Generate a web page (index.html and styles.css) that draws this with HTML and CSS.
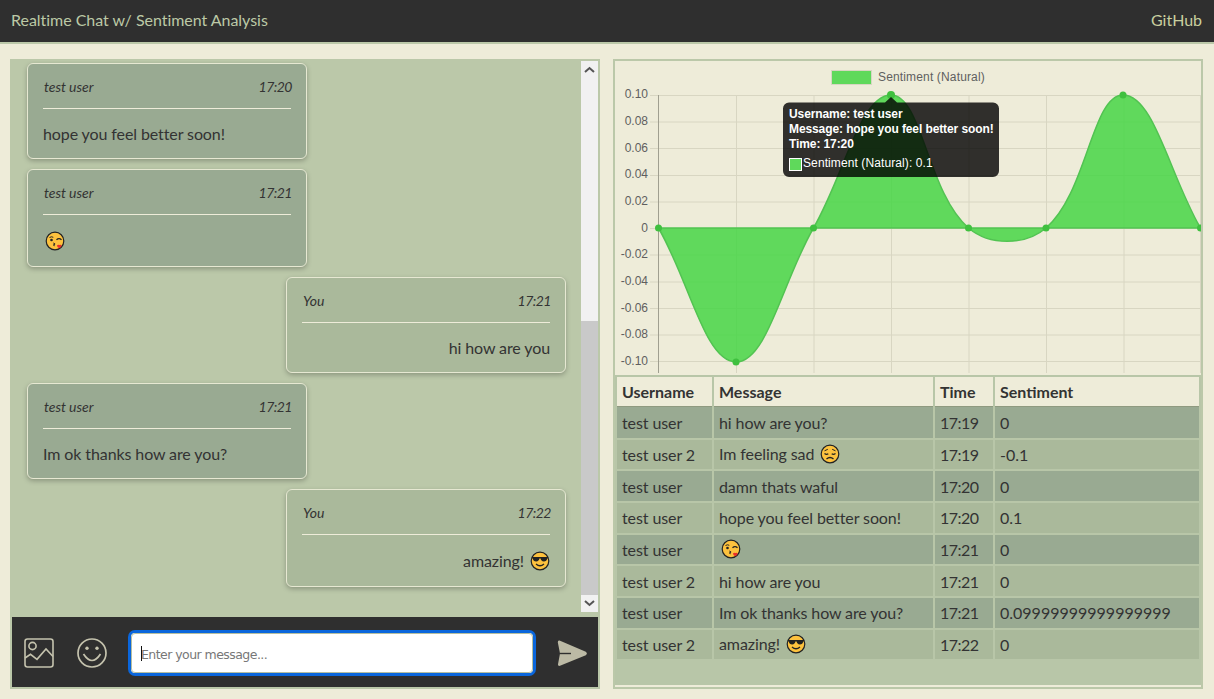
FILE: index.html
```html
<!DOCTYPE html>
<html lang="en">
<head>
    <meta charset="UTF-8">
    <meta name="viewport" content="width=device-width, initial-scale=1.0">
    <title>Realtime Chat w/ Sentiment Analysis</title>
    <link rel="stylesheet" href="styles.css">
</head>
<body>

    <svg class="defs" width="0" height="0">
        <symbol id="emojiKiss" viewBox="0 0 20 20">
            <circle cx="10" cy="10" r="8.800" fill="#fdc23e" stroke="#222" stroke-width="1.200"/>
            <path d="M4.500 6.500q2-1.300 3.800-.2" fill="none" stroke="#222" stroke-width="1"/>
            <path d="M11.500 8.800q2.500-2.400 5 0" fill="none" stroke="#222" stroke-width="1.300"/>
            <circle cx="6.500" cy="9" r="1.300" fill="#222"/>
            <path d="M8.300 12l1.800 1-1.800 1 1.400 .8" fill="none" stroke="#222" stroke-width="1"/>
            <path d="M12 14.500q1-1.200 2.300-.4q1.600-.8 2.400 .6q-.5 1.700-2.500 2.600q-2.300-1-2.200-2.800z" fill="#e8302a"/>
        </symbol>
        <symbol id="emojiSad" viewBox="0 0 20 20">
            <circle cx="10" cy="10" r="8.800" fill="#fdc23e" stroke="#222" stroke-width="1.200"/>
            <path d="M4.500 6.800l3.300-1.500M15.500 6.800l-3.300-1.500" stroke="#222" stroke-width="1"/>
            <path d="M4.500 9.500q2 1.500 3.800 .3M15.500 9.500q-2 1.500-3.800 .3" fill="none" stroke="#222" stroke-width="1.200"/>
            <path d="M6.500 15q3.500-3 7 0" fill="none" stroke="#222" stroke-width="1.300"/>
        </symbol>
        <symbol id="emojiCool" viewBox="0 0 20 20">
            <circle cx="10" cy="10" r="8.800" fill="#fdc23e" stroke="#222" stroke-width="1.200"/>
            <path d="M2 6h16v1.400l-.8 0q-.4 3-3.400 3q-2.800 0-3.200-2.800h-1.200q-.4 2.800-3.200 2.800q-3 0-3.400-3l-.8 0z" fill="#222"/>
            <path d="M6 13q4 3.500 8 0" fill="none" stroke="#222" stroke-width="1.300"/>
        </symbol>
    </svg>

    <header class="topbar">
        <span>Realtime Chat w/ Sentiment Analysis</span>
        <a href="#">GitHub</a>
    </header>

    <main class="layout">
        <section class="panel chat">
            <div class="chat-body">
                <div class="messages">
                    <div class="msg">
                        <div class="msg-head"><span>test user</span><span class="msg-time">17:20</span></div>
                        <div class="msg-text">hope you feel better soon!</div>
                    </div>
                    <div class="msg">
                        <div class="msg-head"><span>test user</span><span class="msg-time">17:21</span></div>
                        <div class="msg-text"><svg class="emoji"><use href="#emojiKiss"/></svg></div>
                    </div>
                    <div class="msg mine">
                        <div class="msg-head"><span>You</span><span class="msg-time">17:21</span></div>
                        <div class="msg-text">hi how are you</div>
                    </div>
                    <div class="msg">
                        <div class="msg-head"><span>test user</span><span class="msg-time">17:21</span></div>
                        <div class="msg-text">Im ok thanks how are you?</div>
                    </div>
                    <div class="msg mine">
                        <div class="msg-head"><span>You</span><span class="msg-time">17:22</span></div>
                        <div class="msg-text">amazing! <svg class="emoji"><use href="#emojiCool"/></svg></div>
                    </div>
                </div>
                <div class="scrollbar">
                    <div class="scroll-btn"><svg width="11" height="7" viewBox="0 0 11 7"><path d="M1 6l4.500-4 4.500 4" fill="none" stroke="#555" stroke-width="2"/></svg></div>
                    <div class="scroll-track"><div class="scroll-thumb"></div></div>
                    <div class="scroll-btn"><svg width="11" height="7" viewBox="0 0 11 7"><path d="M1 1l4.500 4 4.500-4" fill="none" stroke="#555" stroke-width="2"/></svg></div>
                </div>
            </div>
            <div class="composer">
                <svg class="tool" viewBox="0 0 30 30" width="30" height="30">
                    <rect x="1" y="1" width="28" height="28" rx="2.500" fill="none" stroke="#c5c3ae" stroke-width="1.600"/>
                    <circle cx="8.500" cy="8" r="3.600" fill="none" stroke="#c5c3ae" stroke-width="1.600"/>
                    <path d="M1 20l5.500-3.700 6.500 5 9-10.300 7 7.500" fill="none" stroke="#c5c3ae" stroke-width="1.600"/>
                </svg>
                <svg class="tool" viewBox="0 0 30 30" width="30" height="30">
                    <circle cx="15" cy="15" r="14" fill="none" stroke="#c5c3ae" stroke-width="1.700"/>
                    <circle cx="10" cy="10.300" r="1.700" fill="#c5c3ae"/>
                    <circle cx="20" cy="10.300" r="1.700" fill="#c5c3ae"/>
                    <path d="M6.500 16q8.500 13 17 0" fill="none" stroke="#c5c3ae" stroke-width="1.700"/>
                </svg>
                <div class="input-wrap">
                    <input class="message-input" type="text" placeholder="Enter your message...">
                </div>
                <svg class="send" viewBox="0 0 30 26" width="30" height="26">
                    <path d="M2.500 .6L28.800 11.800q2.200 1.800 0 3.400L3 25.800q-2.200 .5-2-1.500L3 13.500L.8 2.200q0-2 1.700-1.600z" fill="#bcbaa5"/>
                    <path d="M3 13.500H14" stroke="#2f2f2f" stroke-width="1.400"/>
                </svg>
            </div>
        </section>

        <section class="panel stats">
            <div class="chart">
                <svg class="chart-svg" viewBox="615 61 586 312" width="586" height="312">
                    <rect class="legend-box" x="831.500" y="70.500" width="40" height="14"/>
                    <text class="legend" x="878" y="81">Sentiment (Natural)</text>

                    <path class="grid" d="M650 95.500H1201M650 122H1201M650 148.500H1201M650 175.500H1201M650 202H1201M650 228.500H1201M650 255H1201M650 282H1201M650 308.500H1201M650 335H1201M650 361.500H1201"/>
                    <path class="grid" d="M736.500 95V373M814 95V373M891.500 95V373M969 95V373M1046.500 95V373M1124 95V373M1200.500 95V373"/>
                    <path class="axis" d="M658.500 95V373"/>

                    <text class="tick" x="648" y="98">0.10</text>
                    <text class="tick" x="648" y="125">0.08</text>
                    <text class="tick" x="648" y="152">0.06</text>
                    <text class="tick" x="648" y="178">0.04</text>
                    <text class="tick" x="648" y="205">0.02</text>
                    <text class="tick" x="648" y="232">0</text>
                    <text class="tick" x="648" y="258">-0.02</text>
                    <text class="tick" x="648" y="285">-0.04</text>
                    <text class="tick" x="648" y="312">-0.06</text>
                    <text class="tick" x="648" y="338">-0.08</text>
                    <text class="tick" x="648" y="365">-0.10</text>

                    <path class="area" d="M658.500 228C689.500 281.600 705 362 736 362C767 362 782.400 281.600 813.500 228C844.400 174.800 860 95 891 95C922 95 927.300 192.600 968.500 228C989.300 245.800 1025.300 245.800 1046 228C1087.100 192.600 1092 95 1123 95C1154 95 1169.500 174.800 1200.500 228Z"/>
                    <g class="dots">
                        <circle cx="658.500" cy="228" r="3.500"/>
                        <circle cx="736" cy="362" r="3.500"/>
                        <circle cx="813.500" cy="228" r="3.500"/>
                        <circle cx="891" cy="95" r="4"/>
                        <circle cx="968.500" cy="228" r="3.500"/>
                        <circle cx="1046" cy="228" r="3.500"/>
                        <circle cx="1123" cy="95" r="3.500"/>
                        <circle cx="1200.500" cy="228" r="3.500"/>
                    </g>

                    <path class="tip" d="M789 102.500H885L891 97L897 102.500H993a6 6 0 0 1 6 6V171a6 6 0 0 1-6 6H789a6 6 0 0 1-6-6V108.500a6 6 0 0 1 6-6Z"/>
                    <text class="tip-title" x="789" y="118">Username: test user</text>
                    <text class="tip-title" x="789" y="133">Message: hope you feel better soon!</text>
                    <text class="tip-title" x="789" y="148">Time: 17:20</text>
                    <rect class="tip-box" x="789.500" y="158.500" width="12" height="12"/>
                    <text class="tip-body" x="803" y="167">Sentiment (Natural): 0.1</text>
                </svg>
            </div>
            <div class="table-wrap">
                <table class="log">
                    <thead>
                        <tr><th class="col-user">Username</th><th class="col-msg">Message</th><th class="col-time">Time</th><th>Sentiment</th></tr>
                    </thead>
                    <tbody>
                        <tr><td>test user</td><td>hi how are you?</td><td>17:19</td><td>0</td></tr>
                        <tr><td>test user 2</td><td>Im feeling sad <svg class="emoji"><use href="#emojiSad"/></svg></td><td>17:19</td><td>-0.1</td></tr>
                        <tr><td>test user</td><td>damn thats waful</td><td>17:20</td><td>0</td></tr>
                        <tr><td>test user</td><td>hope you feel better soon!</td><td>17:20</td><td>0.1</td></tr>
                        <tr><td>test user</td><td><svg class="emoji"><use href="#emojiKiss"/></svg></td><td>17:21</td><td>0</td></tr>
                        <tr><td>test user 2</td><td>hi how are you</td><td>17:21</td><td>0</td></tr>
                        <tr><td>test user</td><td>Im ok thanks how are you?</td><td>17:21</td><td>0.09999999999999999</td></tr>
                        <tr><td>test user 2</td><td>amazing! <svg class="emoji"><use href="#emojiCool"/></svg></td><td>17:22</td><td>0</td></tr>
                    </tbody>
                </table>
            </div>
        </section>
    </main>

</body>
</html>
```

FILE: styles.css
```css
* {
    box-sizing: border-box;
}
html, body {
    height: 100%;
}
body {
    margin: 0;
    font-family: Lato, "Open Sans", sans-serif;
    font-size: 16px;
    color: #333;
    background-color: #eeecd9;
    overflow: hidden;
}
.defs {
    position: absolute;
}
.topbar {
    display: flex;
    justify-content: space-between;
    align-items: center;
    height: 44px;
    padding: 0 12px 4px 11px;
    background-color: #2f2f2f;
    border-bottom: 2px solid #bbc8a9;
    color: #bcc9a6;
    letter-spacing: -0.03px;
}
.topbar a {
    color: #c9cf9f;
    text-decoration: none;
}
.layout {
    display: flex;
    gap: 13px;
    padding: 15px 11px 0 10px;
}
.panel {
    display: flex;
    flex-direction: column;
    width: 590px;
    height: 630px;
    border: 2px solid #bbc8a9;
}

/* chat side */
.chat-body {
    display: flex;
    height: 556px;
    background-color: #bbc8a9;
}
.messages {
    flex: 1;
    display: flex;
    flex-direction: column;
    gap: 10px;
    padding: 2px 15px 0;
    overflow: hidden;
}
.msg {
    flex: none;
    width: 280px;
    padding: 8px 15px 0;
    background-color: #99aa92;
    border: 1px solid #e6e8d2;
    border-radius: 6px;
    box-shadow: 0 2px 5px rgba(0, 0, 0, 0.25);
}
.msg.mine {
    align-self: flex-end;
    background-color: #aab99b;
}
.msg.mine .msg-text {
    text-align: right;
}
.msg-head {
    display: flex;
    justify-content: space-between;
    height: 37px;
    padding: 6px 0 0 1px;
    font-size: 14px;
    font-style: italic;
    line-height: 18px;
    letter-spacing: -0.05px;
    border-bottom: 1px solid #eeecd9;
}
.msg-time {
    margin-right: -1px;
    letter-spacing: -0.5px;
}
.msg-text {
    padding: 14px 0 13px;
    line-height: 22px;
    letter-spacing: -0.1px;
}
.emoji {
    width: 20px;
    height: 20px;
    margin: 2px 0 2px 2px;
    vertical-align: -6px;
}
.scrollbar {
    flex: none;
    display: flex;
    flex-direction: column;
    width: 17px;
    height: 551px;
    background-color: #f1f1f1;
}
.scroll-btn {
    display: flex;
    align-items: center;
    justify-content: center;
    height: 17px;
}
.scroll-track {
    flex: 1;
    display: flex;
    flex-direction: column;
    justify-content: flex-end;
}
.scroll-thumb {
    height: 274px;
    background-color: #c9c9c9;
}
.composer {
    display: flex;
    align-items: center;
    height: 70px;
    padding: 2px 11px 0 12px;
    background-color: #2f2f2f;
}
.tool {
    flex: none;
    margin-right: 23px;
}
.input-wrap {
    flex: none;
    position: relative;
    width: 408px;
    height: 46px;
    margin-left: -2px;
}
/* text caret, the input is drawn as focused */
.input-wrap::before {
    content: "";
    position: absolute;
    left: 13px;
    top: 16px;
    width: 1px;
    height: 15px;
    background-color: #111;
}
.message-input {
    display: block;
    width: 100%;
    height: 100%;
    padding: 2px 11px 0 10px;
    border: 3px solid #0a66dc;
    border-radius: 7px;
    outline: 1px solid #b5bea0;
    outline-offset: -4px;
    font-family: "DejaVu Sans", sans-serif;
    font-size: 12.5px;
    letter-spacing: -0.55px;
    background-color: #fff;
}
.message-input::placeholder {
    color: #777;
}
.send {
    flex: none;
    margin-left: 21px;
}

/* chart and table side */
.stats {
    background-color: #eeecd9;
}
.chart {
    height: 312px;
    flex: none;
}
.chart-svg {
    display: block;
    font-family: "Liberation Sans", Arial, sans-serif;
    font-size: 12px;
}
.grid {
    fill: none;
    stroke: #d8d6c2;
    stroke-width: 1;
}
.axis {
    fill: none;
    stroke: #a09f90;
    stroke-width: 1;
}
.tick {
    fill: #5f5f5f;
    text-anchor: end;
}
.legend {
    fill: #5f5f5f;
    letter-spacing: 0.15px;
}
.legend-box {
    fill: #5fd95b;
    stroke: #d8d6c2;
    stroke-width: 1;
}
.area {
    fill: rgba(70, 214, 69, 0.85);
    stroke: #52c352;
    stroke-width: 1.5;
}
.dots circle {
    fill: #3fc03f;
}
.tip {
    fill: rgba(0, 0, 0, 0.8);
}
.tip-title {
    fill: #fff;
    font-weight: bold;
    letter-spacing: -0.1px;
}
.tip-body {
    fill: #fff;
    letter-spacing: 0.1px;
}
.tip-box {
    fill: #5fd95b;
    stroke: #fff;
    stroke-width: 1;
}
.table-wrap {
    height: 310px;
    margin-top: 2px;
    background-color: #b8c6a8;
}
.log {
    width: 586px;
    border-spacing: 2px;
    table-layout: fixed;
}
.log th {
    height: 30px;
    padding: 0 5px;
    text-align: left;
    background-color: #eeecd9;
    border-bottom: 1px solid #8f9a80;
    font-weight: bold;
}
.col-user { width: 95px; }
.col-msg { width: 219px; }
.col-time { width: 58px; }
.log td {
    height: 29.67px;
    padding: 0 5px;
    white-space: nowrap;
    letter-spacing: -0.1px;
}
.log td:nth-child(3) {
    letter-spacing: -0.5px;
}
.log td:last-child {
    letter-spacing: 0;
}
.log tbody tr:first-child td {
    height: 28.67px;
    padding-bottom: 1px;
    box-shadow: 0 -2px 0 #99aa92;
}
.log tbody tr:nth-child(odd) td {
    background-color: #99aa92;
}
.log tbody tr:nth-child(even) td {
    background-color: #aab99b;
}
```
